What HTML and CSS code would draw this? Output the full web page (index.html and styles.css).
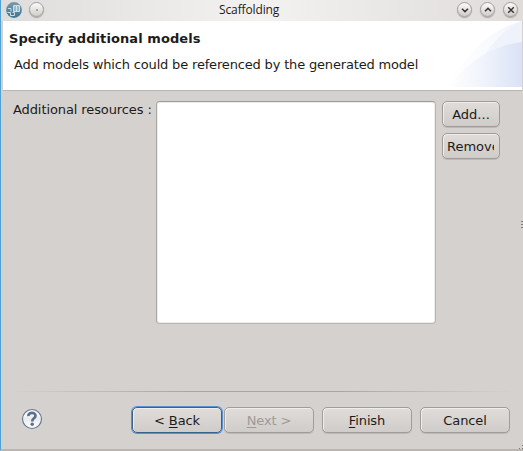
FILE: index.html
```html
<!DOCTYPE html>
<html lang="en">
<head>
<meta charset="utf-8">
<title>Scaffolding</title>
<link rel="stylesheet" href="styles.css">
</head>
<body>
<main class="window">
  <header class="titlebar">
    <div class="title-left">
      <svg width="16" height="16" viewBox="0 0 16 16"><defs><linearGradient id="globe" x2="0" y2="1"><stop stop-color="#7999ab"/><stop offset="1" stop-color="#397795"/></linearGradient></defs><circle cx="8" cy="8" r="7.9" fill="url(#globe)"/><path d="M7.5 3.5h6v6h-6zM10.5 3.5v6M2 6.5h3v3M1.5 10.5h3v3h4v-3h-2" fill="none" stroke="#cfdee6" stroke-width="1"/><path d="M8 4h5v5H8z" fill="#d8e5eb" opacity=".5"/></svg>
      <span class="round"><svg width="14" height="14" viewBox="0 0 14 14"><circle cx="7" cy="7" r=".8" fill="#555"/></svg></span>
    </div>
    <h1>Scaffolding</h1>
    <div class="title-right">
      <span class="round"><svg width="14" height="14" viewBox="0 0 14 14"><path d="M4 5.7 7 8.6 10 5.7"/></svg></span>
      <span class="round"><svg width="14" height="14" viewBox="0 0 14 14"><path d="M4 8.3 7 5.4 10 8.3"/></svg></span>
      <span class="round"><svg width="14" height="14" viewBox="0 0 14 14"><path d="M4.2 4.2 9.8 9.8M9.8 4.2 4.2 9.8"/></svg></span>
    </div>
  </header>
  <section class="banner">
    <h2>Specify additional models</h2>
    <p>Add models which could be referenced by the generated model</p>
    <svg class="swoosh" width="74" height="66" viewBox="0 0 74 66"><defs><linearGradient id="arc"><stop stop-color="#fff"/><stop offset=".45" stop-color="#f1f4fc"/><stop offset="1" stop-color="#dae2f6"/></linearGradient><linearGradient id="rim"><stop stop-color="#fff"/><stop offset=".6" stop-color="#f9fafe"/><stop offset="1" stop-color="#eef2fb"/></linearGradient></defs><path d="M0 66C18 34 38 10 74 0V66Z" fill="url(#rim)"/><path d="M74 0C58 8 45 20 37 34L74 22Z" fill="#edf1fb" opacity=".7"/><path d="M0 66C20 42 40 26 74 21V66Z" fill="url(#arc)"/></svg>
  </section>
  <section class="content">
    <label>Additional resources :</label>
    <div class="list"></div>
    <div class="actions">
      <button class="small">Add...</button>
      <button class="small"><span class="clip">Remove</span></button>
    </div>
  </section>
  <div class="rule"></div>
  <footer>
    <svg class="help" width="22" height="22" viewBox="0 0 22 22"><defs><linearGradient id="hg" x2="0" y2="1"><stop stop-color="#fff"/><stop offset=".5" stop-color="#e9ecee"/><stop offset="1" stop-color="#fff"/></linearGradient></defs><circle cx="11" cy="11" r="9.5" fill="url(#hg)" stroke="#62748f" stroke-width="1.1"/><path d="M7.4 8.1C7.3 3.7 14.5 3.8 14.5 7.7C14.5 10.4 11.2 10.3 11.2 13.4" fill="none" stroke="#5d6f8e" stroke-width="2.7"/><circle cx="11.2" cy="16.3" r="1.7" fill="#5d6f8e"/></svg>
    <button class="wide focused">&lt; <u>B</u>ack</button>
    <button class="wide" disabled><u>N</u>ext &gt;</button>
    <button class="wide finish"><u>F</u>inish</button>
    <button class="wide cancel">Cancel</button>
  </footer>
  <i class="grip"></i>
  <svg class="corner" width="5" height="5" viewBox="0 0 5 5"><path d="M5 0v1H4V0zM5 3v1H4V3zM2 3v1H1V3z" fill="#77736f"/></svg>
</main>
</body>
</html>
```
FILE: styles.css
```css
* { box-sizing: border-box; }
body { margin: 0; overflow: hidden; font: 13px "DejaVu Sans", sans-serif; color: #1d1b1a; }
h1, h2, p { margin: 0; font-size: 13px; line-height: 16px; }
.window {
  position: relative; display: flex; flex-direction: column;
  width: 523px; height: 451px; padding-left: 1px;
  background: #d5d1ce; border-left: 1px solid #4ea2d5; border-bottom: 2px solid #bab5b1;
}
.titlebar {
  display: grid; grid-template-columns: 213px 1fr auto; align-items: center;
  height: 21px; margin-left: -1px; padding: 0 5px 2px;
  background: linear-gradient(90deg, #dfdddb, #f3f2f1 50%, #dfdcda);
}
.titlebar h1 { font: 12px/16px "Open Sans", sans-serif; white-space: nowrap; letter-spacing: -.12px; }
.title-left, .title-right { display: flex; align-items: center; gap: 7px; }
.title-left svg, .round svg { display: block; }
.title-right { gap: 8px; }
.round {
  width: 15px; height: 15px; border: 1px solid #a19e9b; border-radius: 50%;
  background: linear-gradient(#fbfbfa, #d0cdca); box-shadow: 0 1px 1px #aaa6a2;
}
.round svg { margin: -.5px; }
.round path { fill: none; stroke: #383533; stroke-width: 1.5; }
.banner {
  position: relative; flex: none; height: 69px; margin-left: 1px; margin-right: 1px; padding: 10px 6px;
  background: #fff; box-shadow: 0 1px #b8b4b1;
}
.banner h2 { letter-spacing: .08px; }
.banner p { margin: 10px 0 0 5px; letter-spacing: -.17px; }
.swoosh { position: absolute; right: 0; top: 0; }
.content { display: flex; height: 301px; padding: 11px 23px 0 11px; }
.content label { width: 143px; padding-top: 1px; line-height: 16px; white-space: nowrap; letter-spacing: -.1px; }
.list {
  width: 280px; height: 223px; background: #fff; border: 1px solid #b9b5b1;
  border-left-color: #aaa6a3; border-top-color: #9e9a97; border-radius: 4px; box-shadow: inset 0 0 0 1px #efedec;
}
.actions { display: flex; flex-direction: column; gap: 6px; margin-left: 6px; }
button {
  font: inherit; color: inherit; height: 26px; padding: 0; white-space: nowrap;
  border: 1px solid #a19c98; border-radius: 5px;
  background: linear-gradient(#dfdcda, #d0ccc9);
  box-shadow: inset 1px 1px #f0eeed, 0 1px #bdb9b6;
}
.small { width: 58px; overflow: hidden; }
.clip { display: block; width: 47px; margin-left: 4px; overflow: hidden; text-align: left; }
.rule { height: 1px; margin: 0 10px 0 8px; background: linear-gradient(90deg, transparent, #aaa6a2 35%, #aaa6a2 65%, transparent); }
footer { display: flex; align-items: flex-start; padding: 15px 0 0 18px; }
.help { margin: 1px 89px 0 1px; }
.wide { width: 90px; letter-spacing: -.12px; }
.focused {
  border-color: #36628f; margin-right: 2px;
  box-shadow: 0 0 0 1px #5c91cf, inset 1px 1px #f0eeed;
}
button:disabled { color: #9e9a98; }
.finish, .cancel { margin-left: 8px; }
u { text-decoration-thickness: 1px; text-underline-offset: 2px; }
.grip { position: absolute; right: 0; top: 221px; width: 2px; height: 8px; background: repeating-linear-gradient(#7f7b78 0 1px, transparent 1px 3px); }
.corner { position: absolute; right: 0; bottom: -1px; }
```
